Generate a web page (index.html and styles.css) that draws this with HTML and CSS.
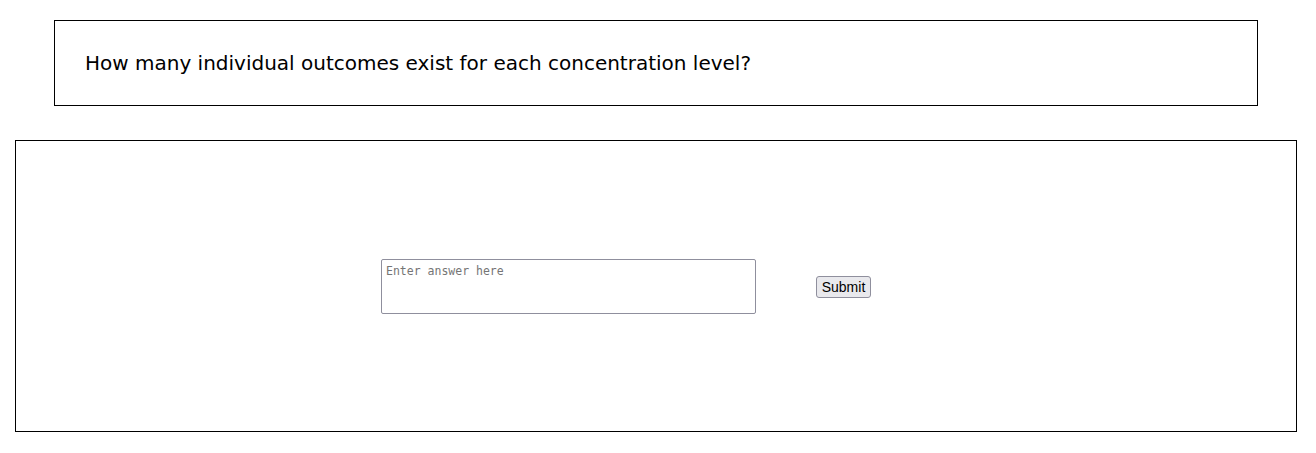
FILE: index.html
```html
<!DOCTYPE html>
<html>
<head>
<meta charset="utf-8">
<link rel="stylesheet" href="styles.css">
</head>
<body>
<div class="question">
  <p class="question-text">How many individual outcomes exist for each concentration level?</p>
</div>
<div class="answer-panel">
  <div class="answer-row">
    <textarea class="answer-input" placeholder="Enter answer here"></textarea>
    <button class="submit-btn" type="button">Submit</button>
  </div>
</div>
</body>
</html>
```
FILE: styles.css
```css
html, body {
  margin: 0;
  padding: 0;
  background: #fff;
}
body {
  padding: 20px 0 0 0;
}
.question {
  box-sizing: border-box;
  margin-left: 54px;
  width: 1204px;
  height: 86px;
  border: 1px solid #000;
  display: flex;
  align-items: center;
  padding-left: 30px;
}
.question-text {
  margin: 0;
  font-family: "DejaVu Sans", Verdana, sans-serif;
  font-size: 20px;
  color: #000;
}
.answer-panel {
  box-sizing: border-box;
  margin: 34px 0 0 15px;
  width: 1282px;
  height: 292px;
  border: 1px solid #000;
  display: flex;
  align-items: center;
}
.answer-row {
  display: flex;
  align-items: center;
  gap: 60px;
  padding-left: 365px;
}
.answer-input {
  box-sizing: border-box;
  width: 375px;
  height: 55px;
  margin: 0;
  padding: 4px 4px 2px;
  border: 1px solid #8f8f9d;
  border-radius: 2px;
  resize: none;
  font-family: "DejaVu Sans Mono", monospace;
  font-size: 11.5px;
}
.answer-input::placeholder {
  color: #757575;
}
.submit-btn {
  box-sizing: border-box;
  width: 55px;
  height: 22px;
  margin: 2px 0 0 0;
  padding: 1px 4px;
  border: 1px solid #8f8f9d;
  border-radius: 3px;
  background: #e9e9ed;
  font-family: "Liberation Sans", Arial, sans-serif;
  font-size: 14px;
  color: #000;
}
```
